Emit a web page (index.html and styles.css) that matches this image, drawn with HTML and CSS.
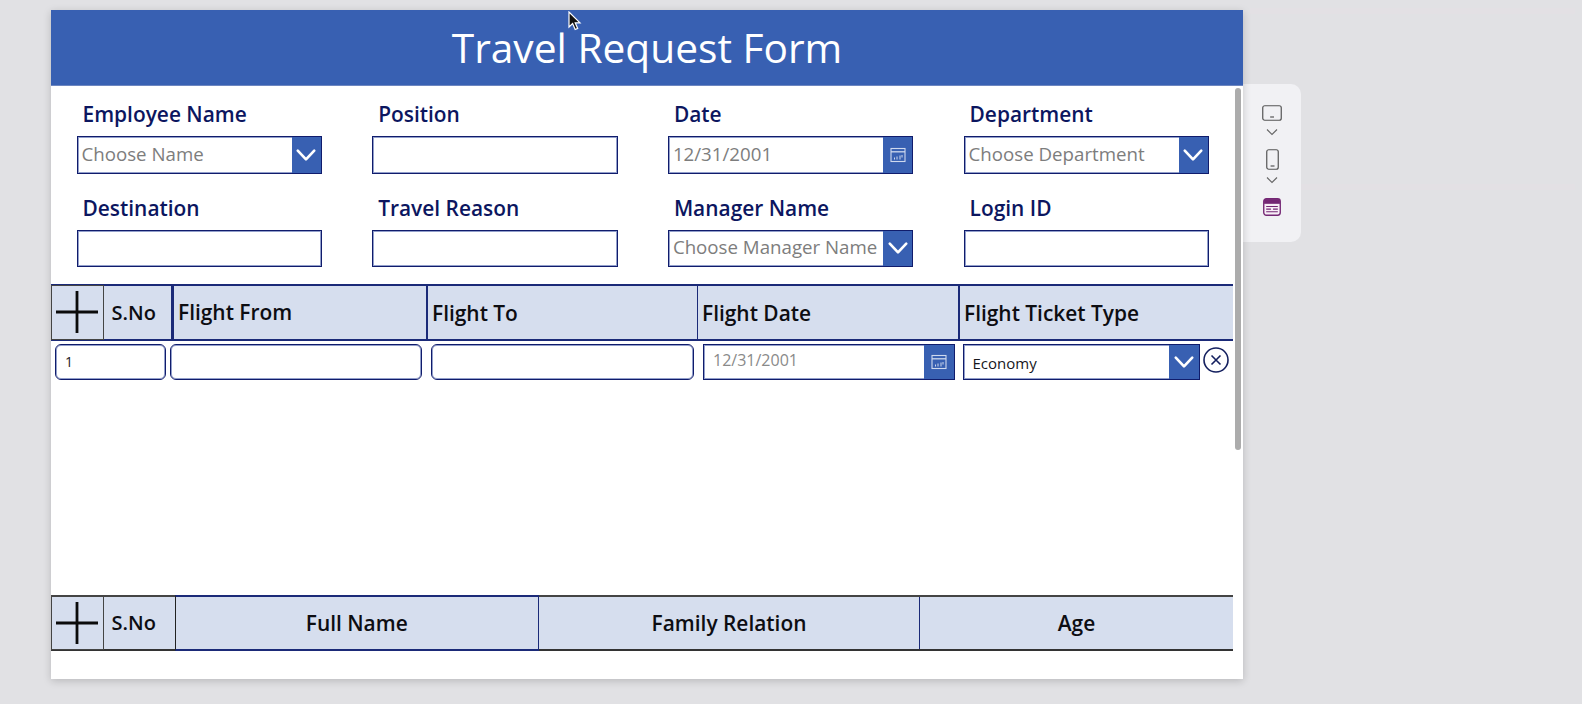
FILE: index.html
```html
<!DOCTYPE html>
<html lang="en">
<head>
<meta charset="utf-8">
<title>Travel Request Form</title>
<link rel="stylesheet" href="styles.css">
</head>
<body>
<svg class="hidden-defs" width="0" height="0" aria-hidden="true">
  <symbol id="chev" viewBox="0 0 20 20"><path d="M2.500 6 L10 14 L17.500 6" fill="none" stroke="#fff" stroke-width="2.400" stroke-linecap="round" stroke-linejoin="round"/></symbol>
  <symbol id="cal" viewBox="0 0 16 16"><rect x="1" y="1.500" width="14" height="13" fill="none" stroke="#cfd9ee" stroke-width="1.100"/><path d="M1 4.800H15" stroke="#cfd9ee" stroke-width="1.300" fill="none"/><path d="M4.500 10.500v2M7 9.500v3M10 8.500v4M12 8v2.500" stroke="#cfd9ee" stroke-width="1" fill="none"/></symbol>
  <symbol id="plus" viewBox="0 0 42 42"><path d="M21 0V42M0 21H42" stroke="#0b0b0b" stroke-width="2.800" fill="none"/></symbol>
</svg>
<div class="stage">
  <main class="card">
    <header class="title-bar"><h1>Travel Request Form</h1></header>
    <section class="form">
      <div class="field"><label>Employee Name</label><div class="control"><span class="ph">Choose Name</span><span class="btn"><svg class="chev"><use href="#chev"/></svg></span></div></div>
      <div class="field"><label>Position</label><div class="control"></div></div>
      <div class="field"><label>Date</label><div class="control"><span class="ph">12/31/2001</span><span class="btn"><svg class="cal"><use href="#cal"/></svg></span></div></div>
      <div class="field"><label>Department</label><div class="control"><span class="ph">Choose Department</span><span class="btn"><svg class="chev"><use href="#chev"/></svg></span></div></div>
      <div class="field"><label>Destination</label><div class="control"></div></div>
      <div class="field"><label>Travel Reason</label><div class="control"></div></div>
      <div class="field"><label>Manager Name</label><div class="control"><span class="ph">Choose Manager Name</span><span class="btn"><svg class="chev"><use href="#chev"/></svg></span></div></div>
      <div class="field"><label>Login ID</label><div class="control"></div></div>
    </section>

    <section class="thead flights">
      <div class="add"><svg class="plus"><use href="#plus"/></svg></div>
      <div class="cell sno sno-end">S.No</div>
      <div class="cell ruled">Flight From</div>
      <div class="cell ruled low">Flight To</div>
      <div class="cell ruled thin low">Flight Date</div>
      <div class="cell ruled low">Flight Ticket Type</div>
    </section>
    <section class="rows">
      <div class="row">
        <div class="box r-sno">1</div>
        <div class="box r-from"></div>
        <div class="box r-to"></div>
        <div class="box square r-date"><span class="ph small">12/31/2001</span><span class="btn r-btn"><svg class="cal"><use href="#cal"/></svg></span></div>
        <div class="box square r-type"><span class="val">Economy</span><span class="btn r-btn"><svg class="chev"><use href="#chev"/></svg></span></div>
        <svg class="close" viewBox="0 0 26 26"><circle cx="13" cy="13" r="12" fill="none" stroke="#14205f" stroke-width="1.600"/><path d="M8.500 8.500L17.500 17.500M17.500 8.500L8.500 17.500" stroke="#14205f" stroke-width="1.600" fill="none"/></svg>
      </div>
    </section>
    <section class="thead family">
      <div class="add"><svg class="plus"><use href="#plus"/></svg></div>
      <div class="cell sno">S.No</div>
      <div class="cell center boxed">Full Name</div>
      <div class="cell center">Family Relation</div>
      <div class="cell center ruled thin dark">Age</div>
    </section>
    <div class="scrollbar"></div>
  </main>
  <aside class="panel">
    <svg class="p-tablet" viewBox="0 0 20 16"><rect x="0.750" y="0.750" width="18.500" height="14.500" rx="2" fill="none" stroke="#555" stroke-width="1.200"/><path d="M8 12h4" stroke="#555" stroke-width="1.200"/></svg>
    <svg class="p-chev first" viewBox="0 0 12 8"><path d="M1 1.500L6 6.500L11 1.500" fill="none" stroke="#666" stroke-width="1.100"/></svg>
    <svg class="p-phone" viewBox="0 0 13 21"><rect x="0.750" y="0.750" width="11.500" height="19.500" rx="2" fill="none" stroke="#555" stroke-width="1.200"/><path d="M4.500 17h4" stroke="#555" stroke-width="1.200"/></svg>
    <svg class="p-chev second" viewBox="0 0 12 8"><path d="M1 1.500L6 6.500L11 1.500" fill="none" stroke="#666" stroke-width="1.100"/></svg>
    <svg class="p-app" viewBox="0 0 17 17"><rect x="0.700" y="0.700" width="15.600" height="15.600" rx="2.500" fill="#f7eef6" stroke="#742774" stroke-width="1.300"/><path d="M1 1h15v4.500H1z" fill="#742774"/><path d="M3 8h11M3 10.500h4.500M9.500 10.500H14M3 13h11" stroke="#742774" stroke-width="1.100"/></svg>
  </aside>
  <svg class="cursor" viewBox="0 0 14 20"><path d="M1 1V16L4.600 12.600L7.200 18.500L9.700 17.400L7.200 11.800H12Z" fill="#111" stroke="#fff" stroke-width="1.200"/></svg>
</div>
</body>
</html>
```
FILE: styles.css
```css
* { box-sizing: border-box; }
html, body { margin: 0; padding: 0; }
body {
  width: 1582px; height: 704px; overflow: hidden;
  background-color: #e1e1e4;
  font-family: "Open Sans", "Noto Sans", sans-serif;
}
.hidden-defs { position: absolute; }
.stage {
  display: flex; align-items: flex-start; padding: 10px 0 0 51px; position: relative; height: 704px;
  background-image:
    linear-gradient(#e3e0e4, #e3e0e4),
    linear-gradient(#e3e0e4, #e3e0e4);
  background-repeat: no-repeat;
  background-size: 325px 6px, 325px 6px;
  background-position: 1250px 8px, 1250px 184px;
}
.card {
  width: 1192px; height: 669px; background: #fff; position: relative;
  box-shadow: 0 2px 8px rgba(0,0,0,.18);
  display: flex; flex-direction: column; flex: none;
}
.title-bar { height: 76px; background: #3860b2; flex: none; display: flex; align-items: center; justify-content: center; border-bottom: 1px solid #6d86c0; }
.title-bar h1 { margin: -2px 0 0; font-size: 40.700px; font-weight: 400; line-height: 76px; color: #fff; }
.form {
  display: grid; grid-template-columns: repeat(4, 245.500px); column-gap: 50.200px; row-gap: 23px;
  padding: 17px 0 17px 25.500px; flex: none;
}
.field label { display: block; height: 24px; line-height: 24px; margin: -1px 0 10px 6px; font-size: 20.900px; font-weight: 600; color: #0c165f; white-space: nowrap; }
.control { height: 37.500px; border: 1px solid #101c6c; box-shadow: inset 0 0 0 1px rgba(56,80,160,.55); background: #fff; display: flex; align-items: center; justify-content: space-between; overflow: hidden; }
.ph { font-size: 18.700px; color: #7d7d7d; padding-left: 4px; white-space: nowrap; margin-top: -3px; }
.btn { background: #3860b2; align-self: stretch; width: 29.500px; flex: none; display: flex; align-items: center; justify-content: center; }
.chev { width: 22px; height: 22px; }
.cal { width: 16px; height: 16px; }
.thead { display: grid; flex: none; background: #d6deee; }
.flights { height: 56.500px; grid-template-columns: 52.500px 68.500px 254px 271px 261px 275px; width: 1182px; border-top: 2px solid #1b2a78; border-bottom: 2px solid #1b2a78; }
.family { height: 56px; grid-template-columns: 52.500px 71px 364.500px 380px 314px; width: 1182px; border-top: 2px solid #444; border-bottom: 2px solid #333; }
.add { border: 1px solid #444; margin: -1px 0; display: flex; align-items: center; justify-content: center; }
.plus { width: 42px; height: 42px; }
.cell { display: flex; align-items: center; font-size: 20.900px; font-weight: 600; color: #0d0d12; padding-left: 4px; white-space: nowrap; }
.sno { padding-left: 8px; font-size: 20px; }
.sno-end { border-right: 1.500px solid #1b2a78; }
.ruled { border-left: 2px solid #1b2a78; }
.thin { border-left-width: 1px; }
.low { padding-top: 2px; }
.center { justify-content: center; padding-left: 0; }
.dark { border-left-color: #1b2a78; }
.boxed { border-left: 1px solid #222; border-right: 1.500px solid #1b2a78; border-top: 2px solid #1b2a78; border-bottom: 2px solid #1b2a78; margin: -2px 0; }
.rows { height: 254px; flex: none; }
.row { display: flex; align-items: flex-start; padding: 3px 0 0 3.500px; }
.box { height: 36.500px; border: 1px solid #101c6c; box-shadow: inset 0 0 0 1px rgba(56,80,160,.55); border-radius: 6px; flex: none; display: flex; align-items: center; overflow: hidden; background: #fff; }
.square { border-radius: 0; justify-content: space-between; }
.r-sno { width: 111px; padding-left: 9.500px; font-size: 14px; color: #222; }
.r-from { width: 252.500px; margin-left: 4px; }
.r-to { width: 263px; margin-left: 9px; }
.r-date { width: 251.500px; margin-left: 9px; }
.r-type { width: 237.500px; margin-left: 8px; }
.small { font-size: 16px; padding-left: 9px; color: #8a8a8a; margin-top: -3px; }
.val { font-size: 15px; color: #16161c; padding-left: 9px; margin-top: 2px; }
.r-btn { width: 30px; }
.close { width: 26px; height: 26px; margin: 3px 0 0 3px; flex: none; }
.scrollbar { position: absolute; left: 1184px; top: 78px; width: 6px; height: 362px; background: #acacac; border-radius: 3px; }
.panel {
  width: 58px; height: 158px; margin-top: 74px; flex: none; background: #f1f1f4;
  border-radius: 0 10px 10px 0; display: flex; flex-direction: column; align-items: center;
  padding-top: 21px;
}
.p-tablet { width: 20px; height: 16px; flex: none; }
.p-phone { width: 13px; height: 21px; flex: none; }
.p-chev { width: 12px; height: 8px; flex: none; }
.first { margin: 7px 0 13px; }
.second { margin: 5.500px 0 14px; }
.p-app { width: 18px; height: 18px; flex: none; }
.cursor { position: absolute; left: 568px; top: 11px; width: 14px; height: 20px; }
```
